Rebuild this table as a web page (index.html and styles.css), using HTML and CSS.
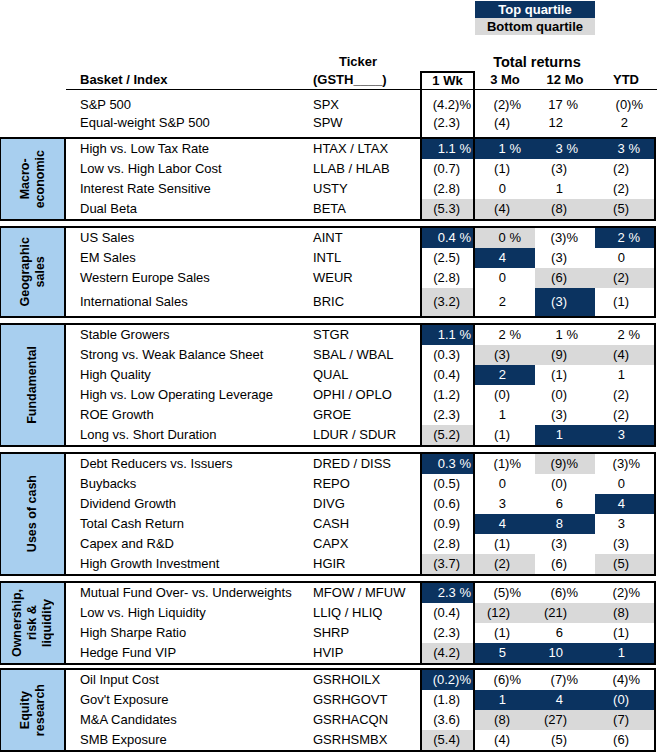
FILE: index.html
```html
<!DOCTYPE html>
<html>
<head>
<meta charset="utf-8">
<link rel="stylesheet" href="styles.css">
</head>
<body>
<div class="page">
  <div class="head">
    <div class="spacer"></div>
    <div class="hbody">
      <div class="hgrid legend-row">
        <div class="legend">
          <div class="lg top">Top quartile</div>
          <div class="lg bot">Bottom quartile</div>
        </div>
      </div>
      <div class="hgrid title-row">
        <div class="ticker-h">Ticker</div>
        <div class="total-h">Total returns</div>
      </div>
      <div class="hgrid col-row">
        <div class="ch name-h">Basket / Index</div>
        <div class="ch tick-h">(GSTH____)</div>
        <div class="ch wk-h">1 Wk</div>
        <div class="ch ctr">3 Mo</div>
        <div class="ch ctr">12 Mo</div>
        <div class="ch ctr">YTD</div>
      </div>
      <div class="idx">
        <div class="hgrid ir">
          <div class="nm">S&amp;P 500</div><div class="tk">SPX</div>
          <div class="v w">(4.2)%</div><div class="v m3">(2)%</div><div class="v m12">17 %</div><div class="v ytd">(0)%</div>
        </div>
        <div class="hgrid ir">
          <div class="nm">Equal-weight S&amp;P 500</div><div class="tk">SPW</div>
          <div class="v w x">(2.3)</div><div class="v m3 x">(4)</div><div class="v m12 xp">12</div><div class="v ytd xp">2</div>
        </div>
      </div>
    </div>
  </div>

  <div class="sec">
    <div class="lab"><span>Macro-<br>economic</span></div>
    <div class="body">
      <div class="r"><div class="nm">High vs. Low Tax Rate</div><div class="tk">HTAX / LTAX</div><div class="v w d">1.1 %</div><div class="v m3 d">1 %</div><div class="v m12 d">3 %</div><div class="v ytd d">3 %</div></div>
      <div class="r"><div class="nm">Low vs. High Labor Cost</div><div class="tk">LLAB / HLAB</div><div class="v w x">(0.7)</div><div class="v m3 x">(1)</div><div class="v m12 x">(3)</div><div class="v ytd x">(2)</div></div>
      <div class="r"><div class="nm">Interest Rate Sensitive</div><div class="tk">USTY</div><div class="v w x">(2.8)</div><div class="v m3 xp">0</div><div class="v m12 xp">1</div><div class="v ytd x">(2)</div></div>
      <div class="r"><div class="nm">Dual Beta</div><div class="tk">BETA</div><div class="v w x g">(5.3)</div><div class="v m3 x g">(4)</div><div class="v m12 x g">(8)</div><div class="v ytd x g">(5)</div></div>
    </div>
  </div>

  <div class="sec">
    <div class="lab"><span>Geographic<br>sales</span></div>
    <div class="body">
      <div class="r"><div class="nm">US Sales</div><div class="tk">AINT</div><div class="v w d">0.4 %</div><div class="v m3 g">0 %</div><div class="v m12">(3)%</div><div class="v ytd d">2 %</div></div>
      <div class="r"><div class="nm">EM Sales</div><div class="tk">INTL</div><div class="v w x">(2.5)</div><div class="v m3 xp d">4</div><div class="v m12 x">(3)</div><div class="v ytd xp">0</div></div>
      <div class="r"><div class="nm">Western Europe Sales</div><div class="tk">WEUR</div><div class="v w x">(2.8)</div><div class="v m3 xp">0</div><div class="v m12 x g">(6)</div><div class="v ytd x g">(2)</div></div>
      <div class="r tall"><div class="nm">International Sales</div><div class="tk">BRIC</div><div class="v w x g">(3.2)</div><div class="v m3 xp">2</div><div class="v m12 x d">(3)</div><div class="v ytd x">(1)</div></div>
    </div>
  </div>

  <div class="sec">
    <div class="lab"><span>Fundamental</span></div>
    <div class="body">
      <div class="r"><div class="nm">Stable Growers</div><div class="tk">STGR</div><div class="v w d">1.1 %</div><div class="v m3">2 %</div><div class="v m12">1 %</div><div class="v ytd">2 %</div></div>
      <div class="r"><div class="nm">Strong vs. Weak Balance Sheet</div><div class="tk">SBAL / WBAL</div><div class="v w x">(0.3)</div><div class="v m3 x g">(3)</div><div class="v m12 x g">(9)</div><div class="v ytd x g">(4)</div></div>
      <div class="r"><div class="nm">High Quality</div><div class="tk">QUAL</div><div class="v w x">(0.4)</div><div class="v m3 xp d">2</div><div class="v m12 x">(1)</div><div class="v ytd xp">1</div></div>
      <div class="r"><div class="nm">High vs. Low Operating Leverage</div><div class="tk">OPHI / OPLO</div><div class="v w x">(1.2)</div><div class="v m3 x">(0)</div><div class="v m12 x">(0)</div><div class="v ytd x">(2)</div></div>
      <div class="r"><div class="nm">ROE Growth</div><div class="tk">GROE</div><div class="v w x">(2.3)</div><div class="v m3 xp">1</div><div class="v m12 x">(3)</div><div class="v ytd x">(2)</div></div>
      <div class="r"><div class="nm">Long vs. Short Duration</div><div class="tk">LDUR / SDUR</div><div class="v w x g">(5.2)</div><div class="v m3 x">(1)</div><div class="v m12 xp d">1</div><div class="v ytd xp d">3</div></div>
    </div>
  </div>

  <div class="sec">
    <div class="lab"><span>Uses of cash</span></div>
    <div class="body">
      <div class="r"><div class="nm">Debt Reducers vs. Issuers</div><div class="tk">DRED / DISS</div><div class="v w d">0.3 %</div><div class="v m3">(1)%</div><div class="v m12 g">(9)%</div><div class="v ytd">(3)%</div></div>
      <div class="r"><div class="nm">Buybacks</div><div class="tk">REPO</div><div class="v w x">(0.5)</div><div class="v m3 xp">0</div><div class="v m12 x">(0)</div><div class="v ytd xp">0</div></div>
      <div class="r"><div class="nm">Dividend Growth</div><div class="tk">DIVG</div><div class="v w x">(0.6)</div><div class="v m3 xp">3</div><div class="v m12 xp">6</div><div class="v ytd xp d">4</div></div>
      <div class="r"><div class="nm">Total Cash Return</div><div class="tk">CASH</div><div class="v w x">(0.9)</div><div class="v m3 xp d">4</div><div class="v m12 xp d">8</div><div class="v ytd xp">3</div></div>
      <div class="r"><div class="nm">Capex and R&amp;D</div><div class="tk">CAPX</div><div class="v w x">(2.8)</div><div class="v m3 x">(1)</div><div class="v m12 x">(3)</div><div class="v ytd x">(3)</div></div>
      <div class="r"><div class="nm">High Growth Investment</div><div class="tk">HGIR</div><div class="v w x g">(3.7)</div><div class="v m3 x g">(2)</div><div class="v m12 x">(6)</div><div class="v ytd x g">(5)</div></div>
    </div>
  </div>

  <div class="sec">
    <div class="lab"><span>Ownership,<br>risk &amp;<br>liquidity</span></div>
    <div class="body">
      <div class="r"><div class="nm">Mutual Fund Over- vs. Underweights</div><div class="tk">MFOW / MFUW</div><div class="v w d">2.3 %</div><div class="v m3">(5)%</div><div class="v m12">(6)%</div><div class="v ytd">(2)%</div></div>
      <div class="r"><div class="nm">Low vs. High Liquidity</div><div class="tk">LLIQ / HLIQ</div><div class="v w x">(0.4)</div><div class="v m3 x g">(12)</div><div class="v m12 x g">(21)</div><div class="v ytd x g">(8)</div></div>
      <div class="r"><div class="nm">High Sharpe Ratio</div><div class="tk">SHRP</div><div class="v w x">(2.3)</div><div class="v m3 x">(1)</div><div class="v m12 xp">6</div><div class="v ytd x">(1)</div></div>
      <div class="r"><div class="nm">Hedge Fund VIP</div><div class="tk">HVIP</div><div class="v w x g">(4.2)</div><div class="v m3 xp d">5</div><div class="v m12 xp d">10</div><div class="v ytd xp d">1</div></div>
    </div>
  </div>

  <div class="sec last">
    <div class="lab"><span>Equity<br>research</span></div>
    <div class="body">
      <div class="r"><div class="nm">Oil Input Cost</div><div class="tk">GSRHOILX</div><div class="v w d">(0.2)%</div><div class="v m3">(6)%</div><div class="v m12">(7)%</div><div class="v ytd">(4)%</div></div>
      <div class="r"><div class="nm">Gov't Exposure</div><div class="tk">GSRHGOVT</div><div class="v w x">(1.8)</div><div class="v m3 xp d">1</div><div class="v m12 xp d">4</div><div class="v ytd x d">(0)</div></div>
      <div class="r"><div class="nm">M&amp;A Candidates</div><div class="tk">GSRHACQN</div><div class="v w x">(3.6)</div><div class="v m3 x g">(8)</div><div class="v m12 x g">(27)</div><div class="v ytd x g">(7)</div></div>
      <div class="r"><div class="nm">SMB Exposure</div><div class="tk">GSRHSMBX</div><div class="v w x g">(5.4)</div><div class="v m3 x">(4)</div><div class="v m12 x">(5)</div><div class="v ytd x">(6)</div></div>
    </div>
  </div>
</div>
</body>
</html>
```

FILE: styles.css
```css
* { box-sizing: border-box; }
html, body { margin: 0; padding: 0; background: #fff; }
body {
  font-family: "Liberation Sans", Arial, sans-serif;
  font-size: 13px;
  color: #000;
}
.page { width: 657px; }

/* header */
.head { display: flex; }
.spacer { flex: 0 0 66px; }
.hbody { flex: 1; }
.hgrid {
  display: grid;
  grid-template-columns: 247px 107px 55px 60px 60px 62px;
}
.legend-row { padding-top: 1px; }
.legend { grid-column: 4 / 6; font-weight: bold; text-align: center; }
.lg { height: 17px; line-height: 17px; }
.lg.top { background: #0b3360; color: #fff; }
.lg.bot { background: #d9d9d9; color: #000; }

.title-row { height: 36px; align-items: end; font-weight: bold; line-height: 18px; }
.ticker-h { grid-column: 2; padding-left: 26px; }
.total-h { grid-column: 3 / 7; text-align: center; font-size: 14.5px; padding-right: 3px; }

.col-row {
  height: 19px;
  border-bottom: 1px solid #000;
  font-weight: bold;
  line-height: 18px;
}
.name-h { padding-left: 14px; }
.wk-h {
  border-top: 2px solid #000;
  border-left: 2px solid #000;
  border-right: 2px solid #000;
  text-align: center;
  line-height: 16px;
}
.ctr { text-align: center; }

.idx { padding: 6px 0 5px; }
.idx .hgrid > div { height: 18px; line-height: 18px; }
.idx .w { border-left: 2px solid #000; border-right: 2px solid #000; }
.idx .ir:first-child .w { margin-top: -6px; height: 24px; padding-top: 6px; }
.idx .ir:last-child .w { margin-bottom: -5px; height: 23px; }

/* sections */
.sec {
  display: flex;
  width: 656px;
  border-top: 2px solid #000;
  border-bottom: 2px solid #000;
  border-left: 1px solid #000;
  border-right: 2px solid #000;
}
.sec + .sec { margin-top: 5px; }
.sec.last { margin-top: 3px; }
.lab {
  flex: 0 0 65px;
  background: #a8cfef;
  border-right: 2px solid #000;
  display: flex;
  align-items: center;
  justify-content: center;
}
.lab span {
  writing-mode: vertical-rl;
  transform: rotate(180deg);
  font-weight: bold;
  font-size: 12.5px;
  line-height: 15px;
  text-align: center;
}
.body { flex: 1; }
.r {
  display: grid;
  grid-template-columns: 247px 107px 55px 60px 60px 59px;
  height: 20px;
  line-height: 20px;
}
.r.tall { height: 28px; line-height: 28px; }
.nm { padding-left: 14px; white-space: nowrap; }
.tk { white-space: nowrap; }

.v { text-align: right; white-space: nowrap; padding-right: var(--p); }
.w { --p: 2px; }
.r .w { border-left: 2px solid #000; border-right: 2px solid #000; }
.m3 { --p: 14px; }
.m12 { --p: 17px; }
.ytd { --p: 14px; }
.v.x { padding-right: calc(var(--p) + 11px); }
.v.xp { padding-right: calc(var(--p) + 15px); }
.d { background: #0b3360; color: #fff; }
.g { background: #d9d9d9; }
```
